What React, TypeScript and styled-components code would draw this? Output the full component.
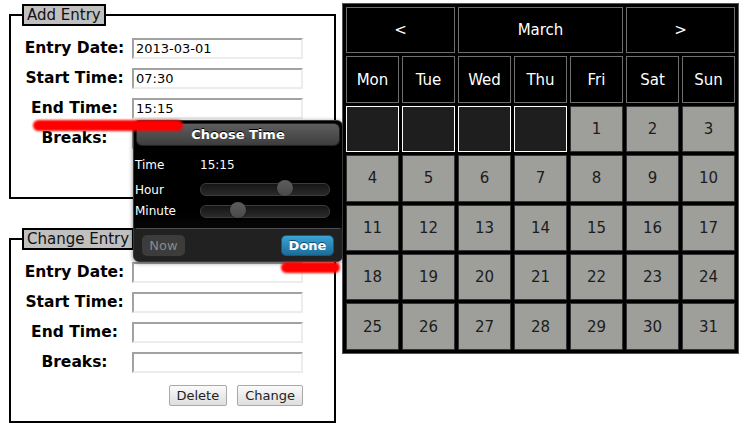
import styled, { createGlobalStyle } from 'styled-components';

const GlobalStyle = createGlobalStyle`
    html, body {
        margin: 0;
        padding: 0;
        background: #fff;
    }
    body {
        font-family: 'DejaVu Sans', Verdana, sans-serif;
    }
`;

const Page = styled.div`
    position: relative;
    width: 744px;
    height: 432px;
    box-sizing: border-box;
    padding: 4px 0 0 9px;
    display: flex;
    align-items: flex-start;
    gap: 6px;
    overflow: hidden;
`;

const Forms = styled.div`
    display: flex;
    flex-direction: column;
    gap: 29px;
    width: 327px;
`;

const Fieldset = styled.fieldset`
    box-sizing: border-box;
    width: 327px;
    margin: 0;
    min-width: 0;
    padding: 12px 31px 15px 8px;
    border: 2px solid #000;
`;

const Legend = styled.legend`
    margin-left: 3px;
    padding: 0 3px;
    border: 2px solid #000;
    background: #c0c0c0;
    color: #111;
    font-size: 15px;
    line-height: 18px;
`;

const FormGrid = styled.div`
    display: grid;
    grid-template-columns: 111px 171px;
    column-gap: 2px;
    row-gap: 9px;
    align-items: center;
`;

const Label = styled.label`
    text-align: center;
    font-size: 15.5px;
    font-weight: bold;
    color: #000;
    line-height: 21px;
`;

const Input = styled.input`
    box-sizing: border-box;
    width: 171px;
    height: 21px;
    margin: 0;
    padding: 0 2px;
    border: 2px solid;
    border-color: #a2a2a2 #ececec #ececec #a2a2a2;
    background: #fff;
    font-family: 'DejaVu Sans', Verdana, sans-serif;
    font-size: 13px;
    color: #000;
    outline: none;
`;

const Actions = styled.div`
    display: flex;
    justify-content: flex-end;
    gap: 10px;
    margin-top: 12px;
`;

const Button = styled.button`
    height: 21px;
    margin: 0;
    padding: 0 7px;
    border: 1px solid #a9a9a9;
    border-radius: 2px;
    background: linear-gradient(#fafafa, #dedede);
    font-family: 'DejaVu Sans', Verdana, sans-serif;
    font-size: 13px;
    color: #222;
`;

/* calendar */

const Calendar = styled.div`
    margin-top: -1px;
    display: grid;
    grid-template-columns: repeat(7, 53px);
    grid-template-rows: repeat(7, 46.4px);
    gap: 3px;
    padding: 3px;
    background: #000;
    border: 1px solid #555;
`;

const HeadCell = styled.div<{ $span?: number }>`
    grid-column: span ${({ $span }) => $span ?? 1};
    display: flex;
    align-items: center;
    justify-content: center;
    border: 1px solid #6e6e6e;
    background: #000;
    color: #fff;
    font-size: 15px;
`;

const DayCell = styled.div<{ $empty?: boolean }>`
    display: flex;
    align-items: center;
    justify-content: center;
    border: 1px solid ${({ $empty }) => ($empty ? '#fff' : '#333')};
    background: ${({ $empty }) => ($empty ? '#1e1e1e' : '#9e9f9b')};
    color: #1c1c1c;
    font-size: 15px;
`;

/* time picker popup */

const Popup = styled.div`
    position: absolute;
    left: 133px;
    top: 120px;
    z-index: 5;
    box-sizing: border-box;
    width: 210px;
    height: 142px;
    display: flex;
    flex-direction: column;
    border: 1px solid #3a3a3a;
    border-radius: 6px;
    background: linear-gradient(#000 65%, #131313);
    overflow: hidden;
    box-shadow: 0 1px 4px rgba(0, 0, 0, 0.5);
`;

const TitleBar = styled.div`
    box-sizing: border-box;
    margin: 2px 2px 0;
    height: 23px;
    display: flex;
    align-items: center;
    justify-content: center;
    border: 1px solid #222;
    border-radius: 6px;
    background: linear-gradient(#5e5e5e, #3d3d3d);
    color: #fff;
    font-size: 13px;
    font-weight: bold;
    text-shadow: 0 -1px 0 #000;
`;

const PickerBody = styled.div`
    flex: 1;
    display: flex;
    flex-direction: column;
    padding: 5px 12px 0 1px;
`;

const PickerRow = styled.div<{ $height: number }>`
    height: ${({ $height }) => $height}px;
    display: grid;
    grid-template-columns: 65px 1fr;
    align-items: center;
    color: #fff;
    font-size: 12px;
`;

const Track = styled.div`
    position: relative;
    height: 11px;
    border: 1px solid #3c3c3c;
    border-radius: 6px;
    background: linear-gradient(#161616, #2a2a2a);
`;

const Thumb = styled.div`
    position: absolute;
    top: -4px;
    width: 16px;
    height: 16px;
    border-radius: 50%;
    background: linear-gradient(#5c5c5c, #4a4a4a);
    box-shadow: 0 0 1px #000;
`;

const FooterStrip = styled.div`
    background: #212121;
`;

const PickerFooter = styled.div`
    display: flex;
    justify-content: space-between;
    align-items: center;
    height: 32px;
    padding: 0 6px;
    border-top: 1px solid #4e4e4e;
    margin: 0 2px;
`;

const NowButton = styled.div`
    width: 43px;
    height: 21px;
    display: flex;
    align-items: center;
    justify-content: center;
    border-radius: 5px;
    background: #3c3c3c;
    color: #8a8a8a;
    font-size: 13px;
`;

const DoneButton = styled.div`
    width: 53px;
    height: 21px;
    display: flex;
    align-items: center;
    justify-content: center;
    box-sizing: border-box;
    border: 1px solid #135a80;
    border-radius: 5px;
    background: linear-gradient(#3ba3d3, #1b6d99);
    color: #fff;
    font-size: 13px;
    font-weight: bold;
    text-shadow: 0 -1px 0 #0e4b6c;
`;

const Streak = styled.div<{ $left: number; $top: number; $width: number }>`
    position: absolute;
    z-index: 6;
    left: ${({ $left }) => $left}px;
    top: ${({ $top }) => $top}px;
    width: ${({ $width }) => $width}px;
    height: 11px;
    border-radius: 6px;
    background: #ff0000;
    filter: blur(1.2px);
`;

const fields = ['Entry Date:', 'Start Time:', 'End Time:', 'Breaks:'];

const Slider = ({ pct }: { pct: number }) => (
    <Track>
        <Thumb style={{ left: `calc(${pct}% - ${(pct / 100) * 16}px)` }} />
    </Track>
);

const EntryForm = ({ title, values, buttons }: { title: string; values: string[]; buttons: string[] }) => (
    <Fieldset>
        <Legend>{title}</Legend>
        <FormGrid>
            {fields.map((f, i) => [
                <Label key={f}>{f}</Label>,
                <Input key={`${f}-in`} defaultValue={values[i] ?? ''} />,
            ])}
        </FormGrid>
        <Actions>
            {buttons.map(b => (
                <Button key={b}>{b}</Button>
            ))}
        </Actions>
    </Fieldset>
);

const weekdays = ['Mon', 'Tue', 'Wed', 'Thu', 'Fri', 'Sat', 'Sun'];

const App = () => {
    const days = Array.from({ length: 35 }, (_, i) => i - 3);

    return (
        <Page>
            <GlobalStyle />
            <Forms>
                <EntryForm title='Add Entry' values={['2013-03-01', '07:30', '15:15', '']} buttons={['Add']} />
                <EntryForm title='Change Entry' values={[]} buttons={['Delete', 'Change']} />
            </Forms>

            <Calendar>
                <HeadCell $span={2}>&lt;</HeadCell>
                <HeadCell $span={3}>March</HeadCell>
                <HeadCell $span={2}>&gt;</HeadCell>
                {weekdays.map(d => (
                    <HeadCell key={d}>{d}</HeadCell>
                ))}
                {days.map(d =>
                    d < 1 ? <DayCell key={d} $empty /> : <DayCell key={d}>{d}</DayCell>,
                )}
            </Calendar>

            <Popup>
                <TitleBar>Choose Time</TitleBar>
                <PickerBody>
                    <PickerRow $height={28}>
                        <span>Time</span>
                        <span>15:15</span>
                    </PickerRow>
                    <PickerRow $height={21}>
                        <span>Hour</span>
                        <Slider pct={68} />
                    </PickerRow>
                    <PickerRow $height={22}>
                        <span>Minute</span>
                        <Slider pct={26} />
                    </PickerRow>
                </PickerBody>
                <FooterStrip>
                    <PickerFooter>
                        <NowButton>Now</NowButton>
                        <DoneButton>Done</DoneButton>
                    </PickerFooter>
                </FooterStrip>
            </Popup>

            <Streak $left={33} $top={120} $width={150} />
            <Streak $left={281} $top={262} $width={59} />
        </Page>
    );
};

export default App;
